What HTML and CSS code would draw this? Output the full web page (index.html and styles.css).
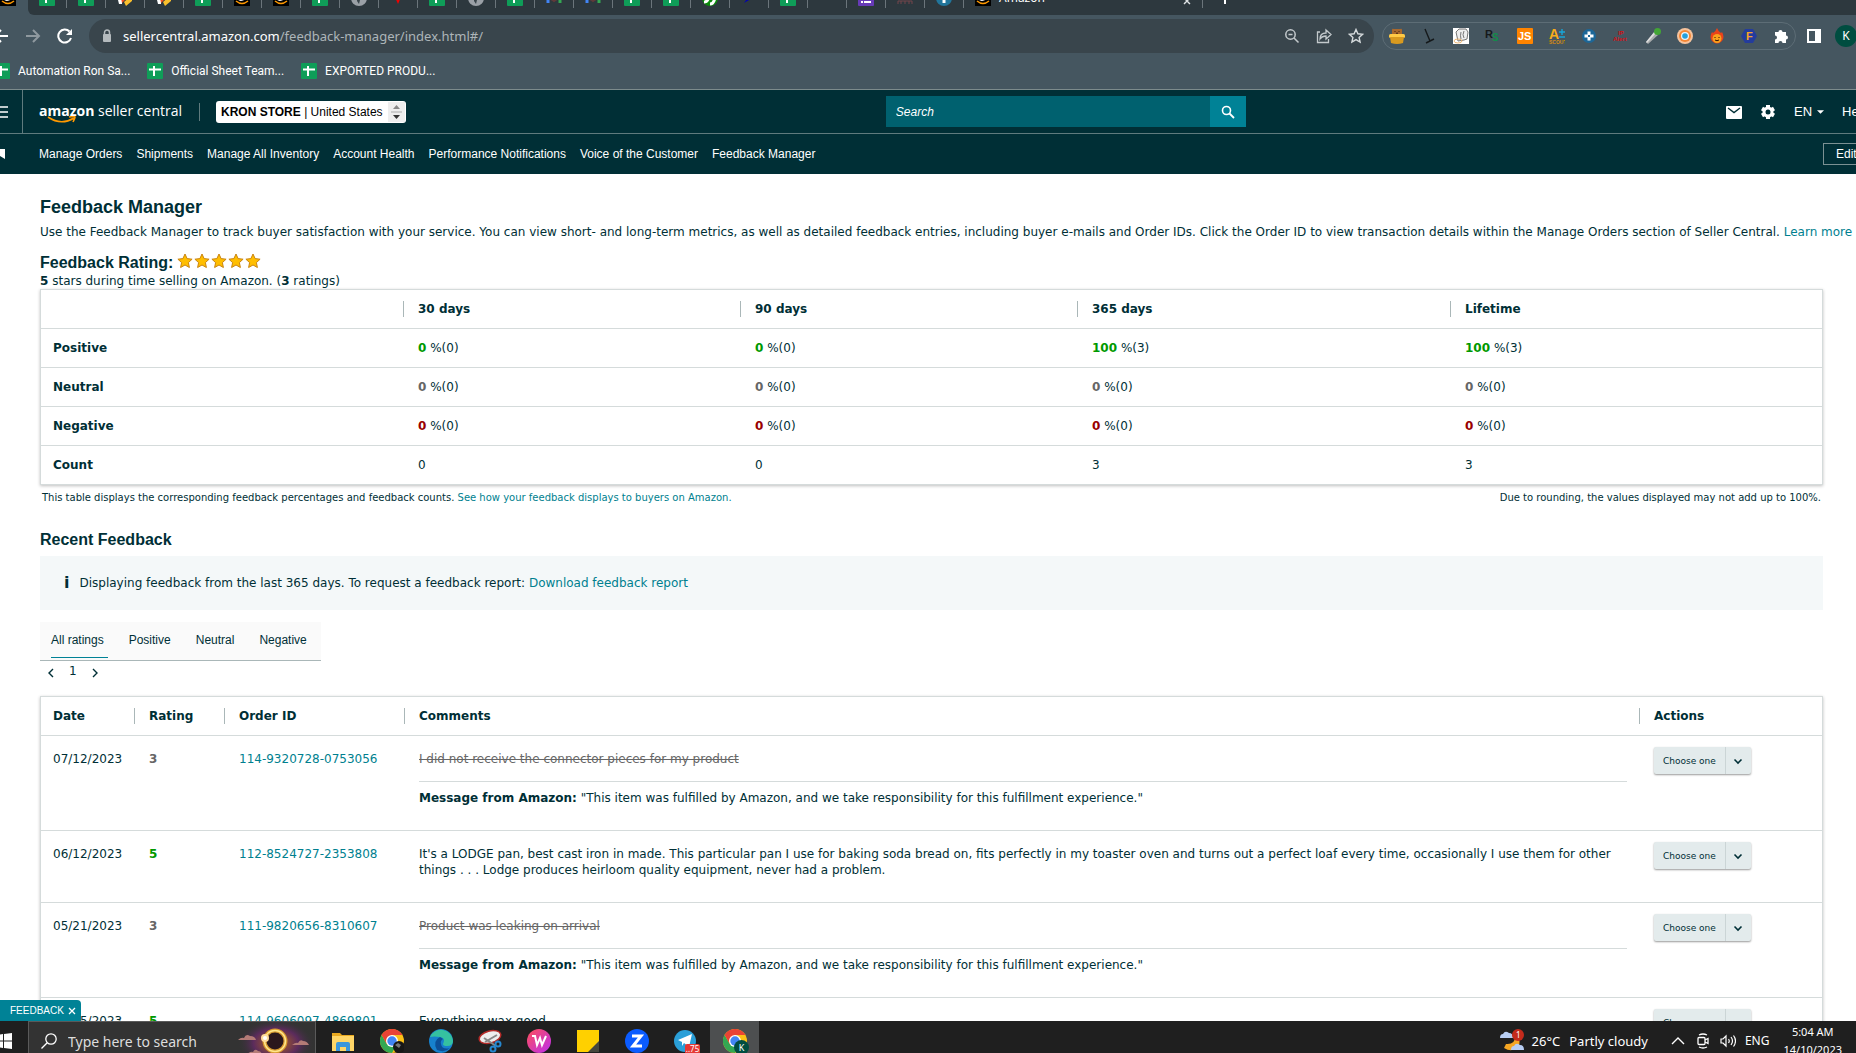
FILE: index.html
```html
<!DOCTYPE html>
<html lang="en">
<head>
    <meta charset="UTF-8">
    <meta name="viewport" content="width=device-width, initial-scale=1.0">
    <title>Feedback Manager</title>
    <link rel="stylesheet" href="styles.css">
</head>
<body>
    <!-- Shared icons -->
    <svg class="sprite" aria-hidden="true">
        <symbol id="sheet" viewBox="0 0 16 16"><rect width="16" height="16" rx="1" fill="#0f9d58"/><path d="M7 3v10M2 6.500h12" stroke="#fff" stroke-width="2"/></symbol>
        <symbol id="amazon" viewBox="0 0 16 16"><rect width="16" height="16" fill="#000"/><path d="M5 4q3-3 5 0v6M10 6q-5 0-5 2.500T10 9" fill="none" stroke="#fff" stroke-width="2"/><path d="M2 11q6 5 12 0" fill="none" stroke="#f90" stroke-width="1.500"/></symbol>
        <symbol id="fox" viewBox="0 0 16 16"><path d="M1 10h4v4H2z" fill="#fff"/><path d="M4 8l7-6v5l-6 6z" fill="#f4511e"/><path d="M15 5v6l-6 5-2-4z" fill="#fbc02d"/></symbol>
        <symbol id="globe" viewBox="0 0 16 16"><circle cx="8" cy="8" r="8" fill="#9aa0a6"/><path d="M2 6l4 2v3l2 3 1-4 3-2-3-3" fill="#3a454b"/></symbol>
        <symbol id="bars" viewBox="0 0 16 16"><path d="M2 3v10" stroke="#4285f4" stroke-width="3"/><path d="M5 9l3 2 3-2" stroke="#5f3a3a" stroke-width="2" fill="none"/><path d="M14 3v10" stroke="#34a853" stroke-width="3"/></symbol>
        <symbol id="star" viewBox="0 0 16 16"><path d="M8 1l2.100 4.600 5 .6-3.700 3.400 1 4.900L8 12l-4.400 2.500 1-4.900L.9 6.200l5-.6z" fill="#ffbe00" stroke="#c98410"/></symbol>
        <symbol id="chevron" viewBox="0 0 10 10"><path d="M1.500 3.500L5 7l3.500-3.500" fill="none" stroke="#002f36" stroke-width="1.600"/></symbol>
        <symbol id="chrome" viewBox="0 0 24 24"><circle cx="12" cy="12" r="12" fill="#fbc116"/><path d="M1.600 6A12 12 0 0 0 12 24l5.200-9L12 12 6.800 15z" fill="#34a853"/><path d="M1.600 6A12 12 0 0 1 22.400 6H12l-5.200 9z" fill="#ea4335"/><circle cx="12" cy="12" r="6" fill="#fff"/><circle cx="12" cy="12" r="4.700" fill="#4285f4"/></symbol>
    </svg>

    <!-- Browser window -->
    <header class="browser">
        <div class="tab-strip">
            <div class="tab current-tab"><svg><use href="#amazon"/></svg></div>
            <div class="other-tabs">
                <div class="tab"><svg><use href="#sheet"/></svg></div>
                <div class="tab"><svg><use href="#sheet"/></svg></div>
                <div class="tab"><svg><use href="#fox"/></svg></div>
                <div class="tab"><svg><use href="#fox"/></svg></div>
                <div class="tab"><svg><use href="#sheet"/></svg></div>
                <div class="tab"><svg><use href="#amazon"/></svg></div>
                <div class="tab"><svg><use href="#amazon"/></svg></div>
                <div class="tab"><svg><use href="#sheet"/></svg></div>
                <div class="tab"><svg><use href="#globe"/></svg></div>
                <div class="tab"><svg viewBox="0 0 16 16"><path d="M4 5h8l-4 9z" fill="#f00000"/></svg></div>
                <div class="tab"><svg><use href="#sheet"/></svg></div>
                <div class="tab"><svg><use href="#globe"/></svg></div>
                <div class="tab"><svg><use href="#sheet"/></svg></div>
                <div class="tab"><svg><use href="#bars"/></svg></div>
                <div class="tab"><svg><use href="#bars"/></svg></div>
                <div class="tab"><svg><use href="#sheet"/></svg></div>
                <div class="tab"><svg><use href="#sheet"/></svg></div>
                <div class="tab"><svg viewBox="0 0 16 16"><circle cx="8" cy="8" r="8" fill="#0b8a0b"/><path d="M2 12q4 0 5-6M8 14q4 0 5-7" stroke="#fff" stroke-width="3" fill="none"/></svg></div>
                <div class="tab"><svg viewBox="0 0 16 16"><path d="M3 13l5-7 5 3-5 1z" fill="#0000b4"/></svg></div>
                <div class="tab"><svg><use href="#sheet"/></svg></div>
                <div class="tab"></div>
                <div class="tab"><svg viewBox="0 0 16 16"><rect width="16" height="16" rx="1" fill="#673ab7"/><path d="M3 12h2M6 12h7M6 8h7" stroke="#fff" stroke-width="2"/></svg></div>
                <div class="tab"><svg viewBox="0 0 16 16"><path d="M1 14v-3h14v3M4 11v3M8 11v3M12 11v3" stroke="#75454a" fill="none"/></svg></div>
                <div class="tab"><svg viewBox="0 0 16 16"><circle cx="8" cy="8" r="8" fill="#21759b"/><path d="M8 7v6" stroke="#fff" stroke-width="3"/></svg></div>
                <div class="tab wide-tab"><svg><use href="#amazon"/></svg><span>Amazon</span><svg class="tab-close" viewBox="0 0 8 8"><path d="M1 1l6 6M7 1L1 7" stroke="#dfe3e5" stroke-width="1.400"/></svg></div>
                <svg class="new-tab" viewBox="0 0 12 12"><path d="M6 0v12M0 6h12" stroke="#fff" stroke-width="2"/></svg>
            </div>
        </div>

        <div class="toolbar">
            <button class="tool" aria-label="Back"><svg viewBox="0 0 16 16"><path d="M15 8H2M8 2L2 8l6 6" stroke="#fff" stroke-width="2" fill="none"/></svg></button>
            <button class="tool" aria-label="Forward"><svg viewBox="0 0 16 16"><path d="M1 8h13M8 2l6 6-6 6" stroke="#8f999f" stroke-width="2" fill="none"/></svg></button>
            <button class="tool" aria-label="Reload"><svg viewBox="0 0 16 16"><path d="M14 10A6.500 6.500 0 1 1 12.500 3.500" stroke="#fff" stroke-width="2" fill="none"/><path d="M15 1v6H9z" fill="#fff"/></svg></button>
            <div class="omnibox">
                <svg class="lock" viewBox="0 0 10 14"><path d="M2.500 6V3.500a2.500 2.500 0 0 1 5 0V6" fill="none" stroke="#b4babd" stroke-width="1.500"/><rect x="1" y="5" width="8" height="8" rx="1" fill="#b4babd"/></svg>
                <span class="url"><b>sellercentral.amazon.com</b>/feedback-manager/index.html#/</span>
                <button class="tool" aria-label="Zoom"><svg viewBox="0 0 16 16"><g fill="none" stroke="#c3c9cc" stroke-width="1.500"><circle cx="6.500" cy="6.500" r="4.700"/><path d="M10 10l4.500 4.500M4.500 6.500h4"/></g></svg></button>
                <button class="tool" aria-label="Share"><svg viewBox="0 0 16 16"><g fill="none" stroke="#c3c9cc" stroke-width="1.300"><path d="M4 4H1.500v10.500h11V11"/><path d="M4 11q0-6 6-6V2l5 4.500L10 11V8q-4 0-6 3z"/></g></svg></button>
                <button class="tool" aria-label="Bookmark"><svg viewBox="0 0 16 16"><path d="M8 1.500l1.900 4.300 4.700.5-3.500 3.100 1 4.600L8 11.600 3.900 14l1-4.600L1.400 6.300l4.700-.5z" fill="none" stroke="#d5dadc" stroke-width="1.400"/></svg></button>
            </div>
            <div class="extensions">
                <svg viewBox="0 0 16 16"><path d="M3 7V2q0-2 2-1h6q2-1 2 1v5z" fill="#a9682d"/><path d="M5.500 3.500h1M9.500 3.500h1M7 5.200h2" stroke="#3d210c"/><rect y="6" width="16" height="4" rx="1.500" fill="#ffca45"/><path d="M1 9h14l-1 6q-6 2-12 0z" fill="#d99a1f"/></svg>
                <svg viewBox="0 0 16 16"><path d="M4 1l5 12M5 15l8-4" stroke="#15191b" stroke-width="1.400"/></svg>
                <svg viewBox="0 0 16 16"><rect width="16" height="16" fill="#fff"/><path d="M3 4l3-3h7l2 3-1 7-3 1-6 1z" fill="#eee" stroke="#777"/><path d="M8 4q-1 4 0 7M11 3q-2 4 0 7" fill="none" stroke="#777"/><ellipse cx="5" cy="13" rx="4" ry="2" fill="none" stroke="#eab676"/></svg>
                <svg viewBox="0 0 16 16"><text x="0" y="10" class="ext-r">R</text><text x="7" y="13" class="ext-s">S</text></svg>
                <svg viewBox="0 0 16 16"><rect width="16" height="16" rx="1" fill="#ff8400"/><text x="1" y="12" class="ext-js">JS</text></svg>
                <svg viewBox="0 0 16 16"><text x="0" y="11" class="ext-a">A</text><path d="M10 4h6M13 1v6M10 9h6" stroke="#18a5d8" stroke-width="1.400"/><text x="0" y="16" class="ext-scout">SCOUT</text></svg>
                <svg viewBox="0 0 16 16"><circle cx="8" cy="8" r="7" fill="#1c6798"/><path d="M8 3.500v9M3.500 8h9" stroke="#fff" stroke-width="3"/><rect x="7" y="7" width="2" height="2" fill="#1c6798"/></svg>
                <svg viewBox="0 0 16 16"><text x="5" y="7" class="ext-ip">IP</text><text x="0" y="13" class="ext-ip">Alert</text></svg>
                <svg viewBox="0 0 16 16"><path d="M1 14L10 3l3 4L3 16z" fill="#a9acad"/><path d="M1 14L10 3l1 2L2 15z" fill="#dedede"/><circle cx="12.500" cy="3.500" r="3.500" fill="#43a536"/></svg>
                <svg viewBox="0 0 16 16"><circle cx="8" cy="8" r="8" fill="#f6c39c"/><circle cx="8" cy="8" r="6" fill="#f58634"/><circle cx="8" cy="8" r="4" fill="#e8f4fb"/><circle cx="8" cy="8" r="2.800" fill="#259fdc"/></svg>
                <svg viewBox="0 0 16 16"><path d="M8 0q1 3 4 5l1-1q3 5 0 9-5 5-10 0-3-4 0-9l1 1q3-2 4-5z" fill="#e8431a"/><circle cx="8" cy="10.500" r="4.500" fill="#f9a11c"/><path d="M6 9v1M10 9v1M6 12q2 1.500 4 0" stroke="#30120a" fill="none"/></svg>
                <svg viewBox="0 0 16 16"><path d="M4 1h8l4 7-4 7H4L0 8z" fill="#243c9c"/><text x="5" y="12" class="ext-f">F</text></svg>
                <svg viewBox="0 0 16 16"><path d="M2 4h3.500a2 2 0 1 1 4 0H13v3.500a2 2 0 1 1 0 4V15H9.500a2 2 0 0 0-4 0H2v-3.500a2 2 0 0 0 0-4z" fill="#fff"/></svg>
            </div>
            <svg class="side-panel" viewBox="0 0 14 14"><path fill-rule="evenodd" d="M0 0h14v14H0zM2 2v10h6V2z" fill="#fff"/></svg>
            <span class="profile">K</span>
        </div>

        <nav class="bookmarks" aria-label="Bookmarks">
            <a href="#"><svg><use href="#sheet"/></svg>Automation Ron Sa...</a>
            <a href="#"><svg><use href="#sheet"/></svg>Official Sheet Team...</a>
            <a href="#"><svg><use href="#sheet"/></svg>EXPORTED PRODU...</a>
        </nav>
    </header>

    <!-- Seller Central header -->
    <div class="topbar">
        <div class="brand">
            <button class="menu" aria-label="Menu"><svg viewBox="0 0 16 14"><path d="M0 2h16M0 7h16M0 12h16" stroke="#fff" stroke-width="1.500"/></svg></button>
            <a class="logo" href="#"><b>amazon</b> seller central
                <svg viewBox="0 0 30 8"><path d="M1 1q13 9 26 1M22 1q6-1 6 0t-2 5" fill="none" stroke="#f90" stroke-width="1.600"/></svg>
            </a>
            <button class="store" aria-haspopup="listbox">
                <span><b>KRON STORE</b> | United States</span>
                <svg viewBox="0 0 17 20"><rect width="17" height="20" fill="#eee"/><path d="M5 7l3.500-4L12 7z" fill="#888"/><path d="M3 10h11" stroke="#aaa"/><path d="M5 13l3.500 4 3.500-4z" fill="#333"/></svg>
            </button>
        </div>
        <form class="search">
            <input type="search" aria-label="Search" placeholder="Search">
            <button type="button" aria-label="Search"><svg viewBox="0 0 14 14"><circle cx="5.500" cy="5.500" r="4" fill="none" stroke="#fff" stroke-width="1.600"/><path d="M8.500 8.500L13 13" stroke="#fff" stroke-width="1.800"/></svg></button>
        </form>
        <div class="account">
            <a href="#" aria-label="Messages"><svg viewBox="0 0 16 16"><rect y="2" width="16" height="13" rx="1" fill="#fff"/><path d="M2 4l6 4.500L14 4" fill="none" stroke="#002f36" stroke-width="1.400"/></svg></a>
            <a href="#" aria-label="Settings"><svg viewBox="0 0 16 16"><path d="M8 1v14M2 4.500l12 7M2 11.500l12-7" stroke="#fff" stroke-width="4"/><circle cx="8" cy="8" r="5.500" fill="#fff"/><circle cx="8" cy="8" r="2.500" fill="#002f36"/></svg></a>
            <button class="lang">EN <svg viewBox="0 0 8 4"><path d="M0 0h8L4 4z" fill="#fff"/></svg></button>
            <a href="#">Help</a>
        </div>
    </div>
    <nav class="favorites" aria-label="Favorites">
        <svg viewBox="0 0 10 10"><path d="M0 0h10v10L5 7l-5 3z" fill="#fff"/></svg>
        <a href="#">Manage Orders</a>
        <a href="#">Shipments</a>
        <a href="#">Manage All Inventory</a>
        <a href="#">Account Health</a>
        <a href="#">Performance Notifications</a>
        <a href="#">Voice of the Customer</a>
        <a href="#">Feedback Manager</a>
        <button class="edit">Edit</button>
    </nav>

    <!-- Feedback Manager -->
    <main class="page">
        <h1>Feedback Manager</h1>
        <p class="intro">Use the Feedback Manager to track buyer satisfaction with your service. You can view short- and long-term metrics, as well as detailed feedback entries, including buyer e-mails and Order IDs. Click the Order ID to view transaction details within the Manage Orders section of Seller Central. <a href="#">Learn more</a></p>

        <h2 class="rating-title">Feedback Rating:
            <span class="stars" role="img" aria-label="5 stars"><svg><use href="#star"/></svg><svg><use href="#star"/></svg><svg><use href="#star"/></svg><svg><use href="#star"/></svg><svg><use href="#star"/></svg></span>
        </h2>
        <p class="rating-line"><b>5</b> stars during time selling on Amazon. (<b>3</b> ratings)</p>

        <table class="grid summary">
            <colgroup><col class="col-label"><col class="col-days"><col class="col-days"><col class="col-year"><col></colgroup>
            <thead>
                <tr><th></th><th><span>30 days</span></th><th><span>90 days</span></th><th><span>365 days</span></th><th><span>Lifetime</span></th></tr>
            </thead>
            <tbody>
                <tr><th>Positive</th><td><b class="good">0</b> %(0)</td><td><b class="good">0</b> %(0)</td><td><b class="good">100</b> %(3)</td><td><b class="good">100</b> %(3)</td></tr>
                <tr><th>Neutral</th><td><b class="neutral">0</b> %(0)</td><td><b class="neutral">0</b> %(0)</td><td><b class="neutral">0</b> %(0)</td><td><b class="neutral">0</b> %(0)</td></tr>
                <tr><th>Negative</th><td><b class="bad">0</b> %(0)</td><td><b class="bad">0</b> %(0)</td><td><b class="bad">0</b> %(0)</td><td><b class="bad">0</b> %(0)</td></tr>
                <tr><th>Count</th><td>0</td><td>0</td><td>3</td><td>3</td></tr>
            </tbody>
        </table>
        <div class="notes">
            <span>This table displays the corresponding feedback percentages and feedback counts. <a href="#">See how your feedback displays to buyers on Amazon.</a></span>
            <span>Due to rounding, the values displayed may not add up to 100%.</span>
        </div>

        <h2>Recent Feedback</h2>
        <div class="info"><b>i</b><span>Displaying feedback from the last 365 days. To request a feedback report: <a href="#">Download feedback report</a></span></div>

        <div class="filters" role="tablist">
            <button class="active" role="tab">All ratings</button>
            <button role="tab">Positive</button>
            <button role="tab">Neutral</button>
            <button role="tab">Negative</button>
        </div>
        <div class="pager">
            <button aria-label="Previous page"><svg viewBox="0 0 6 10"><path d="M5 1L1 5l4 4" fill="none" stroke="#002f36" stroke-width="1.400"/></svg></button>
            <span>1</span>
            <button aria-label="Next page"><svg viewBox="0 0 6 10"><path d="M1 1l4 4-4 4" fill="none" stroke="#002f36" stroke-width="1.400"/></svg></button>
        </div>

        <table class="grid feedback">
            <colgroup><col class="col-date"><col class="col-rating"><col class="col-order"><col><col class="col-actions"></colgroup>
            <thead>
                <tr><th>Date</th><th><span>Rating</span></th><th><span>Order ID</span></th><th><span>Comments</span></th><th><span>Actions</span></th></tr>
            </thead>
            <tbody>
                <tr>
                    <td>07/12/2023</td>
                    <td><b class="neutral">3</b></td>
                    <td><a href="#">114-9320728-0753056</a></td>
                    <td><p><s>I did not receive the connector pieces for my product</s></p><p class="reply"><b>Message from Amazon:</b> "This item was fulfilled by Amazon, and we take responsibility for this fulfillment experience."</p></td>
                    <td><label class="action"><select aria-label="Action for order 114-9320728-0753056"><option>Choose one</option></select><svg><use href="#chevron"/></svg></label></td>
                </tr>
                <tr>
                    <td>06/12/2023</td>
                    <td><b class="good">5</b></td>
                    <td><a href="#">112-8524727-2353808</a></td>
                    <td><p>It's a LODGE pan, best cast iron in made. This particular pan I use for baking soda bread on, fits perfectly in my toaster oven and turns out a perfect loaf every time, occasionally I use them for other things . . . Lodge produces heirloom quality equipment, never had a problem.</p></td>
                    <td><label class="action"><select aria-label="Action for order 112-8524727-2353808"><option>Choose one</option></select><svg><use href="#chevron"/></svg></label></td>
                </tr>
                <tr>
                    <td>05/21/2023</td>
                    <td><b class="neutral">3</b></td>
                    <td><a href="#">111-9820656-8310607</a></td>
                    <td><p><s>Product was leaking on arrival</s></p><p class="reply"><b>Message from Amazon:</b> "This item was fulfilled by Amazon, and we take responsibility for this fulfillment experience."</p></td>
                    <td><label class="action"><select aria-label="Action for order 111-9820656-8310607"><option>Choose one</option></select><svg><use href="#chevron"/></svg></label></td>
                </tr>
                <tr>
                    <td>05/15/2023</td>
                    <td><b class="good">5</b></td>
                    <td><a href="#">114-9606097-4869801</a></td>
                    <td><p>Everything wax good</p></td>
                    <td><label class="action"><select aria-label="Action for order 114-9606097-4869801"><option>Choose one</option></select><svg><use href="#chevron"/></svg></label></td>
                </tr>
            </tbody>
        </table>
        <button class="feedback-tag">FEEDBACK <svg viewBox="0 0 8 8"><path d="M1 1l6 6M7 1L1 7" stroke="#fff" stroke-width="1.300"/></svg></button>
    </main>

    <!-- Desktop taskbar -->
    <footer class="taskbar">
        <button class="start" aria-label="Start"><svg viewBox="0 0 16 16"><path d="M0 2l7-1v6.500H0zM8 1l8-1v7.500H8zM0 8.500h7V15l-7-1zM8 8.500h8V16l-8-1z" fill="#fff"/></svg></button>
        <label class="desk-search">
            <svg class="lens" viewBox="0 0 16 16"><circle cx="10" cy="6" r="5.200" fill="none" stroke="#fff" stroke-width="1.300"/><path d="M6.200 9.800L.5 15.500" stroke="#fff" stroke-width="1.300"/></svg>
            <input type="text" placeholder="Type here to search">
            <svg class="eclipse" viewBox="0 0 78 40">
                <defs><radialGradient id="glow"><stop offset=".3" stop-color="#8a4a3a"/><stop offset=".6" stop-color="#5b2b5c"/><stop offset="1" stop-color="#333" stop-opacity="0"/></radialGradient></defs>
                <ellipse cx="39" cy="22" rx="38" ry="24" fill="url(#glow)"/>
                <circle cx="38" cy="20" r="10.500" fill="#2a171c" stroke="#d89a30" stroke-width="4"/><circle cx="38" cy="20" r="10.500" fill="none" stroke="#ffe58a" stroke-width="1.500"/>
                <circle cx="28" cy="17" r="4" fill="#ffdc9b"/><circle cx="28" cy="17" r="2" fill="#fff"/>
                <path d="M1 19q3-3 6-2 2-5 6-2 5 0 6 4zM55 24q4-3 6-2 2-4 5-2 4 0 6 4zM10 33q4-3 6-2 2-4 5-1 3 0 4 3z" fill="#b47b76"/>
            </svg>
        </label>
        <div class="apps">
            <button aria-label="File Explorer"><svg viewBox="0 0 24 24"><path d="M1 4h8l2 2h12v16H1z" fill="#e9a920"/><path d="M1 7h22v15H1z" fill="#ffd667"/><path d="M5 22v-7q0-2 2-2h10q2 0 2 2v7h-4v-4H9v4z" fill="#3a97dc"/></svg></button>
            <button aria-label="Chrome"><svg viewBox="0 0 24 24"><use href="#chrome"/><circle cx="19" cy="18" r="6" fill="#171717"/><path d="M15 16l3-2 3 2-2 3z" fill="#777"/></svg></button>
            <button aria-label="Edge"><svg viewBox="0 0 24 24"><circle cx="12" cy="12" r="12" fill="#1781cd"/><path d="M1 8A12 12 0 0 1 24 12q0 5-6 5-4 0-4-2 3-6-3-7Q5 7 1 8z" fill="#35c1a0"/><path d="M11 8q-8 4-3 13 8 3 13-2-8 2-9-4-1-3 2-5z" fill="#0c4f97"/></svg></button>
            <button aria-label="Snipping Tool"><svg viewBox="0 0 24 24"><ellipse cx="12" cy="8" rx="11" ry="6" fill="#eee" stroke="#b52b29" stroke-width="1.500" transform="rotate(-15 12 8)"/><path d="M7 13l12-7M6 9l12 8" stroke="#888" stroke-width="2"/><g fill="none" stroke="#2687cf" stroke-width="2"><circle cx="20" cy="15" r="2.500"/><circle cx="15" cy="20" r="2.500"/></g></svg></button>
            <button aria-label="WPS Office"><svg viewBox="0 0 24 24"><defs><linearGradient id="wps" x2="1" y2="1"><stop stop-color="#ff4f58"/><stop offset="1" stop-color="#bc2df0"/></linearGradient></defs><circle cx="12" cy="12" r="12" fill="url(#wps)"/><path d="M5 7h3l2 9 3-7 2 7 4-9" fill="none" stroke="#fff" stroke-width="2"/></svg></button>
            <button aria-label="Sticky Notes"><svg viewBox="0 0 24 24"><path d="M1 1h22v12L13 23H1z" fill="#ffd000"/><path d="M23 12v11H12z" fill="#46463d"/></svg></button>
            <button aria-label="Zoom"><svg viewBox="0 0 24 24"><circle cx="12" cy="12" r="12" fill="#0b5cff"/><path d="M7 7h9l-8 10h9" fill="none" stroke="#fff" stroke-width="3"/></svg></button>
            <button aria-label="Telegram"><svg viewBox="0 0 24 24"><circle cx="11" cy="12" r="11" fill="#2a9fd8"/><path d="M4 11l14-6-3 13-5-4-2 3v-4z" fill="#fff"/></svg><span class="count">..75</span></button>
            <button class="open" aria-label="Chrome"><svg viewBox="0 0 24 24"><use href="#chrome"/></svg><span class="badge-k">K</span></button>
        </div>
        <div class="tray">
            <svg class="weather" viewBox="0 0 24 24"><path d="M6 15q9 1 10-9 6 6 2 12-6 6-14 1z" fill="#f5a623"/><path d="M0 9q0-4 3-4 2-4 6-1 4 0 4 5zM11 21q0-4 3-4 2-4 6-1 4 0 4 5z" fill="#b7cdf2"/><circle cx="18" cy="6" r="6" fill="#c42b1c"/><text x="16" y="9">1</text></svg>
            <span class="temp">26°C</span>
            <span class="sky">Partly cloudy</span>
            <svg class="tray-icon" viewBox="0 0 16 16"><path d="M2 11l6-6 6 6" fill="none" stroke="#fff" stroke-width="1.400"/></svg>
            <svg class="tray-icon" viewBox="0 0 16 16"><g fill="none" stroke="#fff" stroke-width="1.300"><rect x="3" y="4.500" width="7" height="7" rx="1"/><path d="M10 7l3-1.500v5L10 9M4 2q4-2 8 0M4 14q4 2 8 0"/></g></svg>
            <svg class="tray-icon" viewBox="0 0 16 16"><g fill="none" stroke="#fff" stroke-width="1.200"><path d="M1 6h2l3-3v10l-3-3H1zM8.500 6q1.500 2 0 4M11 4q3 4 0 8M13.500 2.500q4 5.500 0 11"/></g></svg>
            <span class="keyboard">ENG</span>
            <div class="clock"><span>5:04 AM</span><span>14/10/2023</span></div>
        </div>
    </footer>
</body>
</html>
```
FILE: styles.css
```css
* {
    box-sizing: border-box;
}

body {
    margin: 0;
    height: 100vh;
    display: flex;
    flex-direction: column;
    overflow: hidden;
    background: #fff;
    color: #002f36;
    font-family: "DejaVu Sans", Verdana, sans-serif;
    font-size: 12px;
    line-height: 16px;
}

.sprite {
    display: none;
}

a {
    color: #007f8f;
    text-decoration: none;
}

button {
    padding: 0;
    border: 0;
    background: none;
    color: inherit;
    font: inherit;
}

svg {
    display: block;
    flex: none;
}

/* Browser window */
.browser {
    flex: none;
    background: #455660;
    border-bottom: 1px solid #7d8b8c;
    color: #fff;
    font-family: "Noto Sans", sans-serif;
}

.tab-strip {
    display: flex;
    height: 15px;
    overflow: hidden;
}

.other-tabs {
    flex: 1;
    display: flex;
    background: #2d383e;
    border-bottom-left-radius: 6px;
}

.tab {
    width: 39px;
    height: 8px;
    padding-bottom: 2px;
    display: flex;
    flex: none;
    align-items: flex-end;
    justify-content: center;
    border-right: 1px solid #6b757b;
}

.tab svg {
    width: 16px;
    height: 16px;
}

.current-tab {
    width: 28px;
    border: 0;
    justify-content: flex-start;
}

.wide-tab {
    width: 239px;
    padding-left: 11px;
    padding-right: 11px;
    gap: 8px;
    justify-content: flex-start;
}

.wide-tab span {
    font-size: 12px;
    line-height: 16px;
}

.wide-tab .tab-close {
    width: 8px;
    height: 8px;
    margin-left: auto;
    margin-bottom: 1px;
}

.new-tab {
    width: 12px;
    height: 12px;
    margin: -8px 16px 0;
}

.toolbar {
    display: flex;
    align-items: center;
    padding: 4px 0;
    height: 42px;
}

.toolbar > .tool {
    width: 16px;
    margin-right: 16px;
}

.toolbar > .tool:first-child {
    margin-left: -7px;
}

.tool svg {
    width: 16px;
    height: 16px;
}

.omnibox {
    flex: 1;
    display: flex;
    align-items: center;
    gap: 16px;
    height: 34px;
    margin-right: 8px;
    padding: 0 10px 0 13px;
    border-radius: 17px;
    background: #39454c;
}

.lock {
    width: 10px;
    height: 14px;
    margin-right: -5px;
}

.url {
    flex: 1;
    color: #adb5b9;
    font-size: 13px;
}

.url b {
    color: #fff;
    font-weight: normal;
}

.extensions {
    display: flex;
    align-items: center;
    gap: 16px;
    height: 28px;
    padding: 0 6px;
    border: 1px solid #5d6d76;
    border-radius: 14px;
}

.extensions svg {
    width: 16px;
    height: 16px;
    font-family: "Liberation Sans", sans-serif;
    font-weight: bold;
}

.ext-r { font-size: 11px; fill: #16191b; }
.ext-s { font-size: 10px; fill: #138a4a; }
.ext-js { font-size: 11px; fill: #fff; }
.ext-a { font-size: 14px; fill: #f7ac1b; }
.ext-scout { font-size: 5px; fill: #d98a10; }
.ext-ip { font-size: 6px; fill: #d40f16; }
.ext-f { font-size: 11px; fill: #f4a428; }

.side-panel {
    width: 14px;
    height: 14px;
    margin: 0 14px 0 11px;
}

.profile {
    width: 22px;
    height: 22px;
    margin-right: -1px;
    border-radius: 50%;
    background: #004d40;
    font-size: 12px;
    line-height: 22px;
    text-align: center;
}

.bookmarks {
    display: flex;
    gap: 17px;
    height: 32px;
    padding-top: 6px;
    margin-left: -6px;
    font-family: Roboto, sans-serif;
}

.bookmarks a {
    display: flex;
    align-items: flex-start;
    gap: 8px;
    color: #fff;
}

.bookmarks svg {
    width: 16px;
    height: 16px;
}

/* Seller Central header */
.topbar {
    flex: none;
    display: flex;
    justify-content: space-between;
    align-items: center;
    height: 44px;
    background: #002f36;
    border-bottom: 1px solid #5f7b7e;
    color: #fff;
    font-family: "Liberation Sans", Arial, sans-serif;
}

.brand {
    display: flex;
    align-items: center;
    align-self: stretch;
}

.menu {
    align-self: stretch;
    width: 23px;
    border-right: 1px solid #5f7b7e;
}

.menu svg {
    width: 16px;
    height: 14px;
    margin-left: -8px;
}

.logo {
    position: relative;
    margin-left: 16px;
    padding-right: 17px;
    padding-bottom: 2px;
    border-right: 1px solid #5f7b7e;
    color: #fff;
    font-family: "Open Sans", sans-serif;
    font-size: 14px;
    line-height: 16px;
    white-space: nowrap;
}

/* smile under the word amazon */
.logo svg {
    position: absolute;
    left: 8px;
    top: 13px;
    width: 30px;
    height: 8px;
}

.store {
    display: flex;
    align-items: center;
    margin-left: 16px;
    height: 22px;
    padding: 0 1px 0 5px;
    gap: 5px;
    border-radius: 3px;
    background: #fff;
    color: #000;
    font-size: 12px;
}

.store svg {
    width: 17px;
    height: 20px;
}

.search {
    display: flex;
    width: 360px;
    height: 31px;
}

.search input {
    flex: 1;
    min-width: 0;
    padding: 0 10px;
    border: 0;
    border-radius: 0;
    background: #00616f;
    color: #fff;
    font: italic 12px "Liberation Sans", Arial, sans-serif;
}

.search input::placeholder {
    color: #fff;
}

.search button {
    width: 36px;
    background: #008296;
}

.search svg {
    width: 14px;
    height: 14px;
    margin: auto;
}

.account {
    display: flex;
    align-items: center;
    width: 130px;
    gap: 18px;
    overflow: hidden;
    font-size: 13px;
}

.account a {
    color: #fff;
}

.account svg {
    width: 16px;
    height: 16px;
}

.lang {
    display: flex;
    align-items: center;
    gap: 5px;
}

.lang svg {
    width: 7px;
    height: 4px;
}

.favorites {
    flex: none;
    display: flex;
    align-items: center;
    gap: 14px;
    height: 40px;
    background: #002f36;
    color: #fff;
    font-family: "Liberation Sans", Arial, sans-serif;
}

.favorites a {
    color: #fff;
}

.favorites > svg {
    width: 10px;
    height: 10px;
    margin-left: -5px;
    margin-right: 20px;
}

.edit {
    width: 48px;
    height: 22px;
    margin-left: auto;
    margin-right: -15px;
    padding-left: 12px;
    border: 1px solid #7b9193;
    text-align: left;
}

/* Feedback Manager */
.page {
    flex: 1;
    position: relative;
    min-height: 0;
    overflow: hidden;
    padding: 22px 33px 0 40px;
}

h1,
h2 {
    margin: 0;
    font-family: "Liberation Sans", Arial, sans-serif;
    font-size: 18px;
    line-height: 22px;
}

h2 {
    font-size: 16px;
    line-height: 20px;
}

p {
    margin: 0;
}

.intro {
    margin: 6px 0 13px;
    white-space: nowrap;
}

.rating-title {
    display: flex;
    align-items: center;
    gap: 4px;
}

.stars {
    display: flex;
    gap: 1px;
    margin-bottom: 4px;
}

.stars svg {
    width: 16px;
    height: 16px;
}

.grid {
    width: 100%;
    table-layout: fixed;
    border-collapse: separate;
    border-spacing: 0;
    border: 1px solid #d5dbdb;
    box-shadow: 0 1px 3px rgba(0, 0, 0, 0.25);
}

.grid th,
.grid td {
    padding: 0 12px;
    text-align: left;
}

.grid thead th {
    height: 38px;
    padding-left: 0;
}

.grid thead th:first-child {
    padding-left: 12px;
}

.grid thead span {
    display: block;
    padding-left: 14px;
    border-left: 1px solid #aab7b8;
}

.grid tbody th,
.grid tbody td {
    border-top: 1px solid #d5dbdb;
    padding-left: 15px;
}

.grid tbody tr > :first-child {
    padding-left: 12px;
}

.summary tbody tr {
    height: 39px;
}

.col-label { width: 362px; }
.col-days { width: 337px; }
.col-year { width: 373px; }
.col-date { width: 93px; }
.col-rating { width: 90px; }
.col-order { width: 180px; }
.col-actions { width: 183px; }

.good { color: #090; }
.neutral { color: #666; }
.bad { color: #900; }

.notes {
    display: flex;
    justify-content: space-between;
    margin: 5px 2px 24px;
    font-size: 10px;
}

.info {
    display: flex;
    align-items: center;
    gap: 10px;
    height: 54px;
    margin: 6px 0 12px;
    padding-left: 24px;
    background: #f4f8f9;
}

.info b {
    font-size: 16px;
}

.filters {
    display: flex;
    gap: 21px;
    width: 281px;
    height: 39px;
    padding: 0 11px 2px;
    background: #fafafa;
    border-bottom: 1px solid #aab7b8;
    font-family: "Liberation Sans", Arial, sans-serif;
}

.filters button {
    padding-right: 4px;
    border-bottom: 1px solid transparent;
    white-space: nowrap;
}

.filters .active {
    border-color: #008296;
}

.pager {
    display: flex;
    align-items: center;
    gap: 15px;
    height: 20px;
    margin-bottom: 15px;
    padding-left: 8px;
}

.pager svg {
    width: 6px;
    height: 10px;
    margin-top: 3px;
}

.feedback tbody td {
    padding-top: 15px;
    padding-bottom: 24px;
    vertical-align: top;
}

.feedback tbody td:last-child {
    padding: 11px 0 0 15px;
}

.reply {
    margin-top: 14px;
    padding-top: 8px;
    border-top: 1px solid #d5dbdb;
}

s {
    color: #666;
}

.action {
    display: inline-grid;
    align-items: center;
    width: 97px;
    height: 27px;
}

.action select {
    grid-area: 1 / 1;
    height: 27px;
    padding: 0 9px;
    appearance: none;
    border: 0;
    border-radius: 2px;
    background: linear-gradient(90deg, transparent 71px, #cbd5d6 71px, #cbd5d6 72px, transparent 72px) #e3ebec;
    box-shadow: 0 1px 2px rgba(0, 0, 0, 0.4);
    color: #002f36;
    font: 9px "DejaVu Sans", Verdana, sans-serif;
}

.action svg {
    grid-area: 1 / 1;
    justify-self: end;
    width: 10px;
    height: 10px;
    margin-right: 8px;
    pointer-events: none;
}

.feedback-tag {
    position: absolute;
    left: 0;
    bottom: 0;
    display: flex;
    align-items: center;
    gap: 4px;
    height: 21px;
    padding: 0 5px 0 10px;
    border-top-right-radius: 4px;
    background: #008296;
    color: #fff;
    font: 10px "Liberation Sans", Arial, sans-serif;
}

.feedback-tag svg {
    width: 8px;
    height: 8px;
}

/* Desktop taskbar, its lower edge runs off the screen */
.taskbar {
    flex: none;
    display: flex;
    height: 40px;
    margin-bottom: -8px;
    background: #1f1f1f;
    color: #fff;
    font-family: "Noto Sans", sans-serif;
}

.start {
    width: 28px;
}

.start svg {
    width: 16px;
    height: 16px;
    margin-left: -4px;
}

.desk-search {
    display: flex;
    align-items: center;
    width: 288px;
    padding-left: 12px;
    border: 1px solid #5a5a5a;
    background: #333;
}

.lens {
    width: 16px;
    height: 16px;
}

.desk-search input {
    flex: 1;
    min-width: 0;
    padding: 0 11px;
    border: 0;
    background: none;
    color: #ddd;
    font: 14px "Noto Sans", sans-serif;
}

.desk-search input::placeholder {
    color: #ddd;
}

.eclipse {
    width: 78px;
    height: 40px;
}

.apps {
    display: flex;
    margin-left: 2px;
}

.apps button {
    position: relative;
    width: 49px;
}

.apps svg {
    width: 24px;
    height: 24px;
    margin: auto;
}

.apps .open {
    background: #4d4f50;
}

/* badges over the app icons */
.count,
.badge-k {
    position: absolute;
    color: #fff;
    text-align: center;
}

.count {
    right: 10px;
    bottom: 7px;
    width: 15px;
    border-radius: 2px;
    background: #e53935;
    font-size: 8px;
    line-height: 10px;
}

.badge-k {
    right: 10px;
    bottom: 6px;
    width: 15px;
    height: 15px;
    border-radius: 50%;
    background: #004d40;
    font-size: 9px;
    line-height: 15px;
}

.tray {
    display: flex;
    align-items: center;
    margin-left: auto;
    padding-right: 14px;
    font-size: 13px;
}

.weather {
    width: 24px;
    height: 24px;
    margin-right: 8px;
    font-size: 8px;
    fill: #fff;
}

.temp {
    margin-right: 9px;
}

.sky {
    margin-right: 22px;
}

.tray-icon {
    width: 16px;
    height: 16px;
    margin-right: 9px;
}

.keyboard {
    margin-right: 14px;
    font-size: 12px;
}

.clock {
    display: flex;
    flex-direction: column;
    align-items: center;
    gap: 2px;
    font-size: 11px;
}
```
